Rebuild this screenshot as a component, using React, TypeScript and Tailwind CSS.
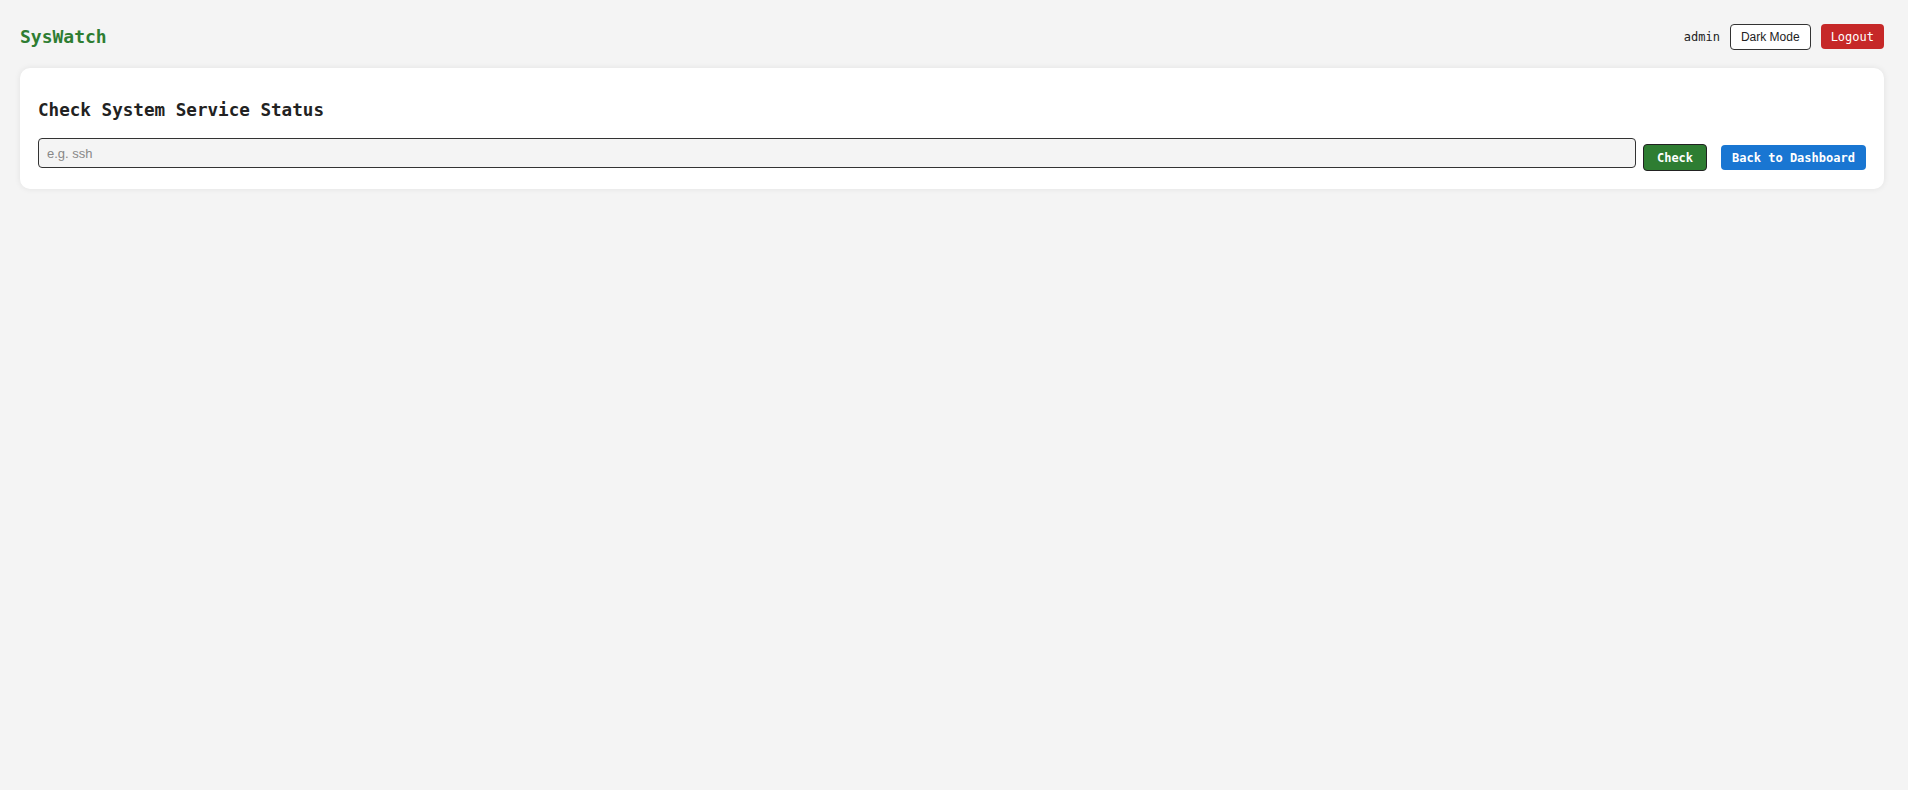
const mono = "font-['DejaVu_Sans_Mono',monospace]";

export default function App() {
  return (
    <div className={`min-h-screen bg-[#f4f4f4] py-[20px] pl-[20px] pr-[24px] ${mono} text-[#222]`}>
      {/* Top bar */}
      <header className="flex h-[33px] items-center justify-between">
        <h1 className="text-[18px] font-bold text-[#2e7d32]">SysWatch</h1>
        <div className="flex items-center">
          <span className="text-[12px] text-[#222]">admin</span>
          <button className="ml-[10px] h-[26px] rounded-[4px] border border-[#333] bg-white px-[10px] font-['Liberation_Sans',Arial,sans-serif] text-[12px] text-[#222]">
            Dark Mode
          </button>
          <button className="ml-[10px] h-[25px] rounded-[4px] bg-[#c62828] px-[10px] text-[12px] text-white">
            Logout
          </button>
        </div>
      </header>

      {/* Service check card */}
      <section className="mt-[15px] rounded-[10px] bg-white px-[18px] pb-[18px] pt-[20px] shadow-[0_0_6px_rgba(0,0,0,0.08)]">
        <h2 className="mt-[12px] text-[17.6px] font-bold leading-[21px] text-[#222]">
          Check System Service Status
        </h2>
        <div className="mt-[17px] flex items-start">
          <input
            type="text"
            placeholder="e.g. ssh"
            className="h-[30px] flex-1 rounded-[4px] border border-[#333] bg-[#f4f4f4] px-[8px] font-['Liberation_Sans',Arial,sans-serif] text-[13px] placeholder:text-[#888] outline-none"
          />
          <button className="ml-[7px] mt-[6px] h-[27px] w-[64px] rounded-[4px] border border-[#222] bg-[#2e7d32] text-[12px] font-bold text-white">
            Check
          </button>
          <button className="ml-[14px] mt-[7px] h-[25px] w-[145px] rounded-[4px] bg-[#1976d2] text-[12px] font-bold text-white">
            Back to Dashboard
          </button>
        </div>
      </section>
    </div>
  );
}
